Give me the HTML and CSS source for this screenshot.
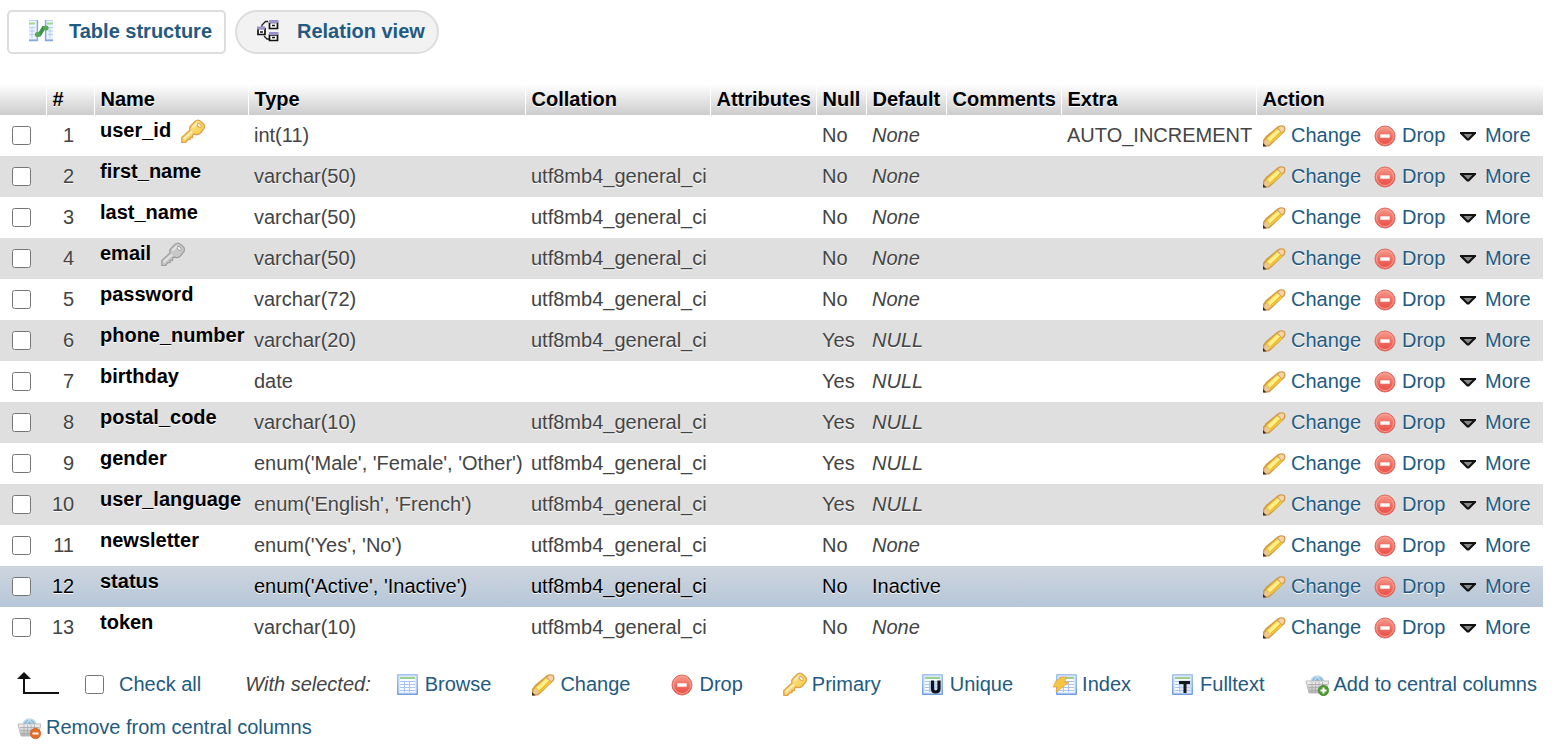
FILE: index.html
```
<!DOCTYPE html>
<html lang="en">
<head>
<meta charset="utf-8">
<title>Table structure</title>
<link rel="stylesheet" href="styles.css">
<script src="structure.js" defer></script>
</head>
<body>
<svg class="sprite" aria-hidden="true">
  <defs>
    <linearGradient id="gold" x1="0" y1="0" x2="1" y2="1"><stop offset="0" stop-color="#fdeb9a"/><stop offset="1" stop-color="#f4c23a"/></linearGradient>
    <linearGradient id="red" x1="0" y1="0" x2="0" y2="1"><stop offset="0" stop-color="#f79a8b"/><stop offset="1" stop-color="#e8473f"/></linearGradient>
    <linearGradient id="blue" x1="0" y1="0" x2="0" y2="1"><stop offset="0" stop-color="#a9c5ee"/><stop offset="1" stop-color="#6f9be0"/></linearGradient>
    <linearGradient id="basket" x1="0" y1="0" x2="0" y2="1"><stop offset="0" stop-color="#f4f4f4"/><stop offset="1" stop-color="#b4b4b4"/></linearGradient>
  </defs>
  <symbol id="i-pencil" viewBox="0 0 24 24">
    <path d="M1 23.500V17L4 13 15.500 3.500Q19 1.500 22.500 3 24.500 6 22.500 9L11 20 7 23.500Z" fill="#cf9a48"/>
    <path d="M2.500 20.500 4.500 15 15 5.500 20.500 10.500 10 19.500 7 21.500Z" fill="#f3c93c"/>
    <path d="M5.500 15.500 15.500 6.500 18 8.500 8 18.500Z" fill="#fdf08c"/>
    <path d="M8.500 18.800 19 9.200" stroke="#e9b62f" stroke-width="1"/>
    <path d="M16 5 18.500 3.500Q21 3 22 4.500 22.500 6.500 21.500 8L20 9.500Z" fill="#f6d3ae"/>
    <path d="M2.500 17.500 4.500 16.500 8 20 6.500 22 2 22.500Z" fill="#ecc795"/>
    <path d="M1 20 4.500 23.500H1Z" fill="#3e2d1b"/>
  </symbol>
  <symbol id="i-drop" viewBox="0 0 24 24">
    <circle cx="12" cy="13" r="10" fill="url(#red)" stroke="#dc6b62"/>
    <circle cx="12" cy="13" r="8.500" fill="none" stroke="#fba295" stroke-width="1"/>
    <rect x="7" y="11" width="10" height="4" fill="#fff" stroke="#e76e64" stroke-width=".6"/>
  </symbol>
  <symbol id="i-more" viewBox="0 0 24 24">
    <path d="M4 9H20V10.500L13 17.500H11L4 10.500Z" fill="#111"/><path d="M7.500 11H16.500L12 15.500Z" fill="#888"/>
  </symbol>
  <g id="key">
    <path d="M.8 23.500V18.500L9 11Q8 8.500 10 6.500L14 2.500Q16 .500 18.500 1.500L22.500 5Q24.200 7 23 9.500L19.500 14Q17.500 16 15 15.500L13 15 11.500 16.500V18.500H9V20.500H7L4.500 23.500Z" stroke-width="1.300"/>
    <path d="M2.800 20 11 12.500M11.500 8.500 16 4" fill="none" class="key-shine" stroke-width="1.800"/>
    <ellipse cx="18.200" cy="6.500" rx="2.300" ry="1.500" transform="rotate(40 18.200 6.500)" class="key-hole"/>
  </g>
  <symbol id="i-key" viewBox="0 0 24 24"><use href="#key" fill="url(#gold)" stroke="#e0a14a"/></symbol>
  <symbol id="i-key-gray" viewBox="0 0 24 24"><use href="#key" fill="#c8c8c8" stroke="#a0a0a0"/></symbol>
  <symbol id="i-table" viewBox="0 0 24 24">
    <rect x="1" y="2" width="21" height="21" rx="1" fill="url(#blue)"/>
    <rect x="2.500" y="3.500" width="18" height="18" fill="#dce9fb"/>
    <rect x="4" y="5" width="15" height="15" fill="#f8fbff"/>
    <path d="M4 6H19" stroke="#9bd08d" stroke-width="2"/>
    <path d="M4 9.500H19M4 12.500H19M4 15.500H19M4 18.500H19M8.500 9V20M13.500 9V20" stroke="#a7c4ec"/>
  </symbol>
  <symbol id="i-unique" viewBox="0 0 24 24">
    <use href="#i-table"/><rect x="9" y="9" width="11" height="11" fill="#bdd2ef" opacity=".7"/>
    <path d="M11.500 8.500V17Q11.500 20 14.700 20T18 17V8.500" fill="none" stroke="#10131a" stroke-width="3.200"/>
  </symbol>
  <symbol id="i-fulltext" viewBox="0 0 24 24">
    <use href="#i-table"/><rect x="9" y="8" width="11" height="12" fill="#bdd2ef" opacity=".5"/>
    <path d="M8 10.500H19M14 10V21" fill="none" stroke="#15171a" stroke-width="3"/>
  </symbol>
  <symbol id="i-index" viewBox="0 0 24 24">
    <use href="#i-table" x="2"/>
    <path d="M9 5 3 9 0 15 4 15 3 20 10 15 16 10 11.500 10 13.500 5Z" fill="#f5c445" stroke="#dfa23c" stroke-width=".7"/>
  </symbol>
  <g id="basket-shape">
    <ellipse cx="12.500" cy="9" rx="6.500" ry="5" fill="#79aed8"/>
    <path d="M6 9Q8 4 12.500 4T19 9M9 9 12.500 5 16 9" fill="none" stroke="#c3dced" stroke-width="1.500"/>
    <path d="M1 9H24L21 21H4Z" fill="url(#basket)" stroke="#bbb"/>
    <path d="M3 12.500H22M3.500 15.500H21M4 18.500H20M7 10V21M10.500 10V21M14 10V21M17.500 10V21" stroke="#aaa" stroke-width=".8"/>
  </g>
  <symbol id="i-basket-add" viewBox="0 0 24 24">
    <use href="#basket-shape"/><circle cx="18.500" cy="18.500" r="5.200" fill="#4e9a32" stroke="#397c26" stroke-width=".6"/>
    <path d="M15.500 18.500H21.500M18.500 15.500V21.500" stroke="#fff" stroke-width="2"/>
  </symbol>
  <symbol id="i-basket-remove" viewBox="0 0 24 24">
    <use href="#basket-shape"/><circle cx="18.500" cy="18.500" r="5.200" fill="#e66b25" stroke="#cf5219" stroke-width=".6"/>
    <path d="M15.500 18.500H21.500" stroke="#fff" stroke-width="2"/>
  </symbol>
  <symbol id="i-structure" viewBox="0 0 24 24">
    <path d="M0 1H9V22H0ZM16 1H24V22H16Z" fill="#bdd2f1"/>
    <path d="M0 2H7.500V20H0ZM17.500 2H24V20H17.500Z" fill="#edf4ff"/>
    <path d="M0 4.500H6M18 4.500H24" stroke="#a4d890" stroke-width="2"/>
    <path d="M0 8.500H6M0 12H6M0 15.500H6M19 8.500H24M19 12H24M19 15.500H24M3 8V19M21 8V19" stroke="#b9cfed"/>
    <path d="M0 21.500H9M16 21.500H24M8.500 1V22M16.500 1V22" stroke="#83a9e1" stroke-width="1.300"/>
    <path d="M8 15.500H10.500L14.500 9H17" fill="none" stroke="#3d9445" stroke-width="4"/><circle cx="8.500" cy="15.500" r="2.600" fill="#55a854"/><circle cx="17" cy="9" r="2.600" fill="#55a854"/>
  </symbol>
  <symbol id="i-relation" viewBox="0 0 24 24">
    <path d="M5 9V6L8.500 2.500H11M7 17 10 20H12" fill="none" stroke="#222" stroke-width="1.300"/>
    <path d="M1 9.500H8V15.500H1ZM12.500 3.500H20.500V9.500H12.500ZM12.500 16H20.500V21.500H12.500Z" fill="#fff" stroke="#111" stroke-width="1.700"/>
    <path d="M0 9H8M12 2.500H21.500M12 14.500H21.500" stroke="#9a91cc" stroke-width="3"/>
    <path d="M3 13H6M15 6.500H18M15 18.500H18" stroke="#111" stroke-width="1.600"/>
  </symbol>
</svg>

<nav class="tabs">
  <a class="tab" href="#structure"><svg class="icon"><use href="#i-structure"/></svg>Table structure</a>
  <a class="tab tab-pill" href="#relations"><svg class="icon"><use href="#i-relation"/></svg>Relation view</a>
</nav>

<main>
  <table class="columns">
    <colgroup>
      <col class="c-check"><col class="c-num"><col class="c-name"><col class="c-type"><col class="c-coll"><col class="c-attr"><col class="c-null"><col class="c-def"><col class="c-comm"><col class="c-extra"><col>
    </colgroup>
    <thead>
      <tr><th></th><th>#</th><th>Name</th><th>Type</th><th>Collation</th><th>Attributes</th><th>Null</th><th>Default</th><th>Comments</th><th>Extra</th><th>Action</th></tr>
    </thead>
    <tbody id="column-rows"></tbody>
  </table>

  <div class="bulk">
    <svg class="arrow" viewBox="0 0 44 24"><path d="M8 6V21H43" fill="none" stroke="#111" stroke-width="2"/><path d="M8 0 15 7H1Z" fill="#111"/></svg>
    <label class="check-all"><input type="checkbox">Check all</label>
    <em class="with">With selected:</em>
    <a href="#browse"><svg class="icon"><use href="#i-table"/></svg>Browse</a>
    <a href="#change"><svg class="icon"><use href="#i-pencil"/></svg>Change</a>
    <a href="#drop"><svg class="icon"><use href="#i-drop"/></svg>Drop</a>
    <a href="#primary"><svg class="icon"><use href="#i-key"/></svg>Primary</a>
    <a href="#unique"><svg class="icon"><use href="#i-unique"/></svg>Unique</a>
    <a href="#index"><svg class="icon"><use href="#i-index"/></svg>Index</a>
    <a href="#fulltext"><svg class="icon"><use href="#i-fulltext"/></svg>Fulltext</a>
    <a href="#add"><svg class="icon"><use href="#i-basket-add"/></svg>Add to central columns</a>
    <a href="#remove"><svg class="icon"><use href="#i-basket-remove"/></svg>Remove from central columns</a>
  </div>
</main>
</body>
</html>
```
FILE: structure.js
```
const utf = 'utf8mb4_general_ci';
const columns = [
  { name: 'user_id', type: 'int(11)', coll: '', extra: 'AUTO_INCREMENT', key: 'i-key' },
  { name: 'first_name', type: 'varchar(50)' },
  { name: 'last_name', type: 'varchar(50)' },
  { name: 'email', type: 'varchar(50)', key: 'i-key-gray' },
  { name: 'password', type: 'varchar(72)' },
  { name: 'phone_number', type: 'varchar(20)', nullable: true },
  { name: 'birthday', type: 'date', coll: '', nullable: true },
  { name: 'postal_code', type: 'varchar(10)', nullable: true },
  { name: 'gender', type: "enum('Male', 'Female', 'Other')", nullable: true },
  { name: 'user_language', type: "enum('English', 'French')", nullable: true },
  { name: 'newsletter', type: "enum('Yes', 'No')" },
  { name: 'status', type: "enum('Active', 'Inactive')", value: 'Inactive', marked: true },
  { name: 'token', type: 'varchar(10)' }
];

const icon = id => `<svg class="icon"><use href="#${id}"/></svg>`;

document.getElementById('column-rows').innerHTML = columns.map((c, i) => `
  <tr${c.marked ? ' class="marked"' : ''}>
    <td class="check"><input type="checkbox" id="col-${i}"></td>
    <td class="num">${i + 1}</td>
    <th class="name" scope="row"><label for="col-${i}">${c.name}${c.key ? icon(c.key) : ''}</label></th>
    <td>${c.type}</td>
    <td>${c.coll ?? utf}</td>
    <td></td>
    <td>${c.nullable ? 'Yes' : 'No'}</td>
    <td>${c.value ?? `<em>${c.nullable ? 'NULL' : 'None'}</em>`}</td>
    <td></td>
    <td>${c.extra ?? ''}</td>
    <td><div class="actions">
      <a href="#change">${icon('i-pencil')}Change</a>
      <a href="#drop">${icon('i-drop')}Drop</a>
      <a href="#more">${icon('i-more')}More</a>
    </div></td>
  </tr>`).join('');
```
FILE: styles.css
```
* { box-sizing: border-box; }

body {
  margin: 0;
  background: #fff;
  color: #444;
  font: 20px/24px "Liberation Sans", Arial, sans-serif;
}

a { color: #235a81; text-decoration: none; }
.sprite { position: absolute; width: 0; height: 0; }
.icon { flex: none; width: 24px; height: 24px; }
.key-shine { stroke: #fff; stroke-opacity: .5; }
.key-hole { fill: #fff; }

input[type="checkbox"] { flex: none; display: block; width: 19px; height: 19px; margin: 0; }

.tabs { display: flex; gap: 9px; padding: 10px 7px 30px; }
.tab {
  display: flex;
  align-items: center;
  gap: 16px;
  height: 44px;
  padding: 0 12px 2px 20px;
  border: 2px solid #ddd;
  border-radius: 5px;
  font-weight: bold;
}
.tab-pill { border-radius: 22px; background: #f2f2f2; }

main { padding-right: 23px; }

.columns {
  width: 100%;
  table-layout: fixed;
  border-collapse: collapse;
  text-align: left;
  text-shadow: 0 1px 0 #fff;
  white-space: nowrap;
}
.c-check { width: 46px; }
.c-num { width: 48px; }
.c-name { width: 154px; }
.c-type { width: 277px; }
.c-coll { width: 185px; }
.c-attr { width: 106px; }
.c-null { width: 50px; }
.c-def { width: 80px; }
.c-comm { width: 115px; }
.c-extra { width: 195px; }

.columns th, .columns td { padding: 0 0 2px 6px; }
.columns thead th {
  height: 31px;
  border-left: 1px solid #fff;
  background: linear-gradient(#fff, #ccc);
  color: #000;
}
.columns thead th:first-child { border-left: 0; }
.columns tbody tr { height: 41px; }
.columns tbody tr:nth-child(even) { background: #dfdfdf; }
.columns tbody tr.marked { background: linear-gradient(#ced6df, #b6c6d7); color: #000; }
.columns .check { padding: 0 0 0 12px; }
.columns .num { padding-right: 20px; text-align: right; }
.columns .name { padding-top: 3px; vertical-align: top; color: #000; }
.name label { display: flex; gap: 10px; }
.name .icon { margin-top: 1px; }

.actions { display: grid; grid-template-columns: 111px 83px auto; }
.actions a { display: flex; align-items: center; gap: 5px; }

.bulk { display: flex; flex-wrap: wrap; align-items: center; gap: 19px 40px; padding: 24px 0 0 17px; }
.bulk a { display: flex; align-items: center; gap: 5px; }
.arrow { width: 44px; height: 24px; margin: 0 -15px 0 -1px; }
.check-all { display: flex; align-items: center; gap: 15px; color: #235a81; }
.with { margin: 0 -15px 0 4px; }
```
